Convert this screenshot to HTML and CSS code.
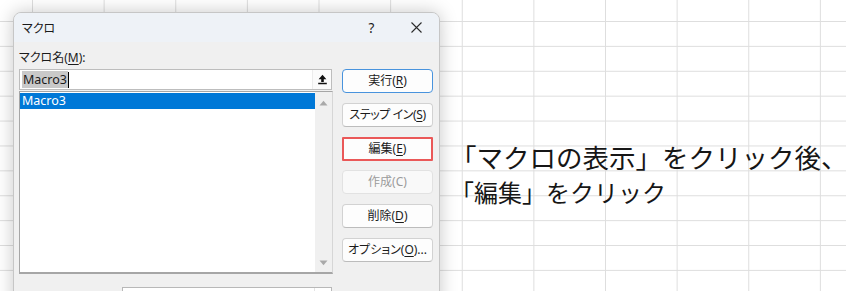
FILE: index.html
```html
<!DOCTYPE html>
<html lang="ja"><head>
  <meta charset="utf-8">
  <title>マクロ</title>
  <link rel="stylesheet" href="styles.css">
</head>
<body>

<div class="sheet">

<div class="dialog">
  <div class="titlebar">
    <span class="title">マクロ</span>
    <span class="cap help">?</span>
    <span class="cap close"><svg width="11" height="11" viewBox="0 0 11 11"><path d="M0.5 0.5L10.5 10.5M10.5 0.5L0.5 10.5" stroke="#2b2b2b" stroke-width="1.1" fill="none"/></svg></span>
  </div>

  <div class="body">
    <div class="main">
      <div class="label">マクロ名(<u>M</u>):</div>
      <div class="namebox">
        <span class="sel">Macro3</span><span class="caret"></span>
        <span class="pick"><svg width="11" height="11" viewBox="0 0 11 11"><path d="M5.5 0.8L1.6 5.2H4.2V8H6.8V5.2H9.4Z" fill="#111"/><path d="M1.2 9.6H9.8" stroke="#111" stroke-width="1.5"/></svg></span>
      </div>
      <div class="list">
        <div class="items">
          <div class="item on">Macro3</div>
        </div>
        <div class="scroll">
          <svg width="9" height="6" viewBox="0 0 9 6"><path d="M0.5 5.5L4.5 0.8L8.5 5.5Z" fill="#a9a9a9"/></svg>
          <svg width="9" height="6" viewBox="0 0 9 6"><path d="M0.5 0.5L4.5 5.2L8.5 0.5Z" fill="#a9a9a9"/></svg>
        </div>
      </div>
      <div class="where"><div class="combo"><span class="drop"></span></div></div>
    </div>

    <div class="buttons">
      <div class="btn default">実行(<u>R</u>)</div>
      <div class="btn tight">ステップ イン(<u>S</u>)</div>
      <div class="btn mark">編集(<u>E</u>)</div>
      <div class="btn off">作成(C)</div>
      <div class="btn">削除(<u>D</u>)</div>
      <div class="btn">オプション(<u>O</u>)...</div>
    </div>
  </div>
</div>

<div class="note">
  <p class="big">「マクロの表示」をクリック後、</p>
  <p>「編集」をクリック</p>
</div>

</div>

</body></html>
```

FILE: styles.css
```css
html,body { margin:0; padding:0; }

body {
  width: 846px;
  height: 291px;
  overflow: hidden;
  color: #1b1b1b;
  font-family: "Noto Sans", "Noto Sans CJK JP", sans-serif;
  background-color: #fff;
  background-image:
    linear-gradient(to right, #dedede 1px, transparent 1px),
    linear-gradient(to bottom, #dedede 1px, transparent 1px);
  background-size: 71.64px 24.9px;
  background-position: 32px 21px;
}

.sheet {
  display: flex;
  align-items: flex-start;
  padding: 12px 0 0 13px;
}

/* dialog */
.dialog {
  flex: none;
  width: 427px;
  height: 320px;
  box-sizing: border-box;
  border: 1px solid #c6c6c6;
  border-radius: 8px 8px 0 0;
  background: #f0f0f0;
  box-shadow: 0 0 18px rgba(0,0,0,.22);
  overflow: hidden;
  font-size: 12px;
  font-feature-settings: "palt";
}

.titlebar {
  height: 29px;
  display: flex;
  align-items: center;
  padding-left: 8px;
  background: #eef2f7;
}
.title { flex: 1; }
.cap {
  width: 45px;
  height: 29px;
  display: flex;
  align-items: center;
  justify-content: center;
}
.help { font-size: 13.5px; }

.body {
  display: grid;
  grid-template-columns: 314px 91px;
  column-gap: 9px;
  padding: 8px 0 0 5px;
}

.label {
  height: 16px;
  line-height: 16px;
  margin-bottom: 3px;
}
u { text-underline-offset: 2px; }

.namebox {
  display: flex;
  align-items: center;
  width: 313px;
  height: 21px;
  box-sizing: border-box;
  border: 1px solid #bdbdbd;
  background: #fff;
  padding-left: 2px;
}
.sel {
  background: #c9c9c9;
  line-height: 17px;
  padding: 0 1px;
  font-size: 12.5px;
}
.caret {
  width: 1px;
  height: 16px;
  background: #000;
}
.pick {
  margin-left: auto;
  width: 18px;
  height: 19px;
  display: flex;
  align-items: center;
  justify-content: center;
  border-left: 1px solid #ececec;
  background: #fbfbfb;
}

.list {
  display: flex;
  margin-top: 1px;
  height: 183px;
  box-sizing: border-box;
  border: 1px solid #a6a6a6;
  border-bottom-width: 2px;
  border-right-color: #d6d6d6;
  background: #fff;
}
.items {
  flex: 1;
  padding-top: 1px;
}
.item {
  height: 16px;
  line-height: 16px;
  padding-left: 2px;
  font-size: 12.5px;
}
.item.on {
  background: #0078d7;
  color: #fff;
}
.scroll {
  width: 17px;
  background: #f0f0f0;
  display: flex;
  flex-direction: column;
  justify-content: space-between;
  align-items: center;
  padding: 8px 0 6px;
}

.where {
  margin: 13px 0 0 103px;
}
.combo {
  display: flex;
  justify-content: flex-end;
  width: 210px;
  height: 22px;
  box-sizing: border-box;
  border: 1px solid #b8b8b8;
  background: #fff;
}
.drop {
  width: 16px;
  border-left: 1px solid #e4e4e4;
}

/* buttons */
.buttons {
  display: flex;
  flex-direction: column;
  gap: 9.8px;
  margin-top: 19px;
}
.btn {
  height: 24px;
  box-sizing: border-box;
  border: 1px solid #d2d2d2;
  border-bottom-color: #bcbcbc;
  border-radius: 4px;
  background: #fdfdfd;
  line-height: 22px;
  text-align: center;
}
.btn.tight { letter-spacing: -0.4px; }
.btn.default { border-color: #4893dd; }
.btn.mark {
  border: 2px solid #ea5858;
  border-radius: 1px;
  line-height: 20px;
}
.btn.off {
  color: #9b9b9b;
  border-color: #e2e2e2;
  background: #f9f9f9;
}

/* annotation */
.note {
  margin: 127px 0 0 10px;
  font-family: "Noto Sans CJK JP", sans-serif;
  font-size: 24px;
  line-height: 35px;
  color: #161616;
  white-space: nowrap;
}
.note p { margin: 0; }
.note .big { font-size: 26.5px; }
```
